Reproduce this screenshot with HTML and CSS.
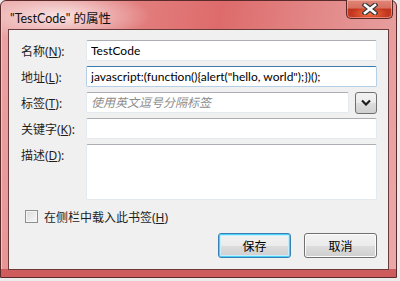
FILE: index.html
```html
<!DOCTYPE html>
<html>
<head>
    <meta charset="UTF-8">
    <title>TestCode 的属性</title>
    <link rel="stylesheet" href="styles.css">
</head>
<body>
    <!-- Bookmark properties dialog -->
    <div class="window">
        <div class="titlebar">
            <span class="title">"TestCode" 的属性</span>
            <button class="close-btn" type="button">
                <svg width="16" height="12" viewBox="0 0 16 12">
                    <path d="M3 2 L13 10 M13 2 L3 10" stroke="#3a3a3a" stroke-width="5" stroke-linecap="square"/>
                    <path d="M3 2 L13 10 M13 2 L3 10" stroke="#ffffff" stroke-width="2.6" stroke-linecap="square"/>
                </svg>
            </button>
        </div>
        <div class="client">
            <form class="props">
                <label class="label">名称(<u>N</u>):</label>
                <input class="field" type="text" value="TestCode">

                <label class="label">地址(<u>L</u>):</label>
                <input class="field focused" type="text" value='javascript:(function(){alert("hello, world");})();'>

                <label class="label">标签(<u>T</u>):</label>
                <div class="tag-row">
                    <input class="field" type="text" placeholder="使用英文逗号分隔标签">
                    <button class="drop-btn" type="button">
                        <svg width="10" height="7" viewBox="0 0 10 7">
                            <polyline points="1,1.5 5,5.5 9,1.5" fill="none" stroke="#1e1e1e" stroke-width="2.2"/>
                        </svg>
                    </button>
                </div>

                <label class="label">关键字(<u>K</u>):</label>
                <input class="field" type="text">

                <label class="label">描述(<u>D</u>):</label>
                <textarea class="field desc"></textarea>
            </form>

            <label class="check-row">
                <span class="checkbox"></span>
                <span>在侧栏中载入此书签(<u>H</u>)</span>
            </label>

            <div class="button-container">
                <button class="btn default" type="button">保存</button>
                <button class="btn" type="button">取消</button>
            </div>
        </div>
    </div>
</body>
</html>
```

FILE: styles.css
```css
/* --- Windows 7 style dialog --- */
body {
    margin: 0;
    padding: 0;
    background: #ececec;
    font-family: "Noto Sans", "Noto Sans CJK SC", sans-serif;
    font-size: 12px;
    color: #1e1e1e;
}

.window {
    width: 397px;
    height: 278px;
    box-sizing: border-box;
    padding: 0 7px 7px 7px;
    border: 1px solid #5b2a2a;
    border-radius: 6px 6px 0 0;
    background:
        radial-gradient(ellipse 90px 26px at 60px 15px, rgba(255, 255, 255, 0.75), rgba(255, 255, 255, 0) 100%),
        linear-gradient(100deg, #eaa5a5 0%, #e48484 25%, #de6b6b 50%, #e49292 80%, #eba9a9 100%);
    display: flex;
    flex-direction: column;
    box-shadow: inset 0 -8px 0 #cf5c5c, inset 1px 0 0 #f2c3c3;
}

.titlebar {
    height: 28px;
    display: flex;
    align-items: flex-start;
    justify-content: space-between;
}

.title {
    margin: 7px 0 0 2px;
    font-family: "Lato", "Noto Sans CJK SC", sans-serif;
    font-size: 12.5px;
    color: #111;
}

.close-btn {
    width: 47px;
    height: 19px;
    margin-right: -4px;
    margin-top: -1px;
    padding: 0;
    border: 1px solid #5a2828;
    border-top: none;
    border-radius: 0 0 5px 5px;
    background:
        radial-gradient(ellipse 18px 7px at 50% 75%, rgba(255, 120, 70, 0.9), rgba(255, 120, 70, 0) 100%),
        linear-gradient(#e0867a 0%, #d6705f 45%, #c2341c 50%, #c43a22 100%);
    box-shadow: inset 0 0 0 1px rgba(255, 200, 190, 0.5);
    display: flex;
    justify-content: center;
    align-items: center;
}

.client {
    flex: 1;
    background: #f0f0f0;
    border: 1px solid #6b3a3a;
    padding: 10px 11px 11px 12px;
    display: flex;
    flex-direction: column;
}

/* Grid of labels and fields */
.props {
    display: grid;
    grid-template-columns: 65px 1fr;
    grid-template-rows: 21px 21px 21px 21px 56px;
    row-gap: 5px;
    margin: 0;
}

.label {
    align-self: center;
    white-space: nowrap;
}

.props .label:last-of-type {
    align-self: start;
    margin-top: 2px;
}

.field {
    box-sizing: border-box;
    width: 100%;
    height: 100%;
    margin: 0;
    padding: 0 4px;
    border: 1px solid #e3e9ef;
    border-top-color: #abadb3;
    border-radius: 2px;
    background: #fff;
    font-family: "Lato", "Noto Sans CJK SC", sans-serif;
    font-size: 12px;
    color: #000;
    outline: none;
}

.field.focused {
    border-color: #b5cfe7;
    border-top-color: #3d7bad;
}

.field::placeholder {
    color: #8d8d8d;
    font-style: italic;
}

.desc {
    resize: none;
}

.tag-row {
    display: flex;
    gap: 6px;
    align-items: center;
}

.drop-btn {
    flex: none;
    width: 22px;
    height: 22px;
    padding: 0;
    border: 1px solid #707070;
    border-radius: 3px;
    background: linear-gradient(#f2f2f2 0%, #ebebeb 50%, #dddddd 51%, #cfcfcf 100%);
    display: flex;
    justify-content: center;
    align-items: center;
}

.check-row {
    display: flex;
    align-items: center;
    gap: 6px;
    margin: 10px 0 0 4px;
    height: 13px;
}

.checkbox {
    width: 11px;
    height: 11px;
    border: 1px solid #8e8f8f;
    background: linear-gradient(135deg, #dcdcdc, #f8f8f8);
    box-shadow: inset 0 0 0 1px #f4f4f4;
}

.button-container {
    margin-top: auto;
    display: flex;
    justify-content: flex-end;
    gap: 13px;
}

.btn {
    width: 73px;
    height: 25px;
    padding: 0;
    border: 1px solid #707070;
    border-radius: 3px;
    background: linear-gradient(#f2f2f2 0%, #ebebeb 50%, #dddddd 51%, #cfcfcf 100%);
    box-shadow: inset 0 0 0 1px #fcfcfc;
    font-family: "Noto Sans", "Noto Sans CJK SC", sans-serif;
    font-size: 12px;
    color: #000;
}

.btn.default {
    border-color: #3c7fb1;
    box-shadow: inset 0 0 0 1px #48d1f8, inset 0 0 0 2px #c6eefc;
}
```
